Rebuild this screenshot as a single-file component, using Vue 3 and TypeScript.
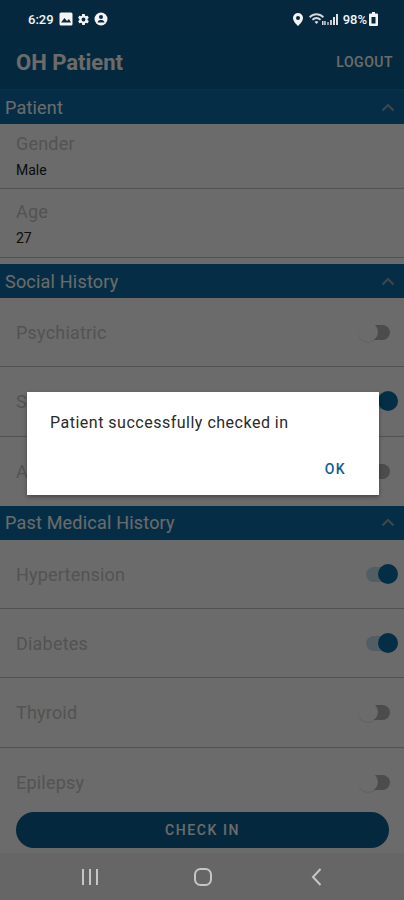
<script setup lang="ts">
interface Section {
  title: string
  kind: 'info' | 'toggle'
  rows: { label: string; value?: string; on?: boolean }[]
}

const sections: Section[] = [
  {
    title: 'Patient',
    kind: 'info',
    rows: [
      { label: 'Gender', value: 'Male' },
      { label: 'Age', value: '27' }
    ]
  },
  {
    title: 'Social History',
    kind: 'toggle',
    rows: [
      { label: 'Psychiatric', on: false },
      { label: 'Smoking', on: true },
      { label: 'Alcohol', on: false }
    ]
  },
  {
    title: 'Past Medical History',
    kind: 'toggle',
    rows: [
      { label: 'Hypertension', on: true },
      { label: 'Diabetes', on: true },
      { label: 'Thyroid', on: false },
      { label: 'Epilepsy', on: false }
    ]
  }
]
</script>

<template>
  <div class="screen">
    <div class="status-bar">
      <div class="status-side">
        <span class="time">6:29</span>
        <svg width="14" height="14" viewBox="0 0 14 14">
          <rect x="0.5" y="0.5" width="13" height="13" rx="1.5" fill="#f4f4f4" />
          <path d="M2 10.5 5.5 6l2.5 3 2-2 2 3.5z" fill="#0a2a40" />
        </svg>
        <svg width="13" height="13" viewBox="0 0 24 24">
          <path fill="#f4f4f4" d="M19.4 13c.1-.3.1-.7.1-1s0-.7-.1-1l2.1-1.6c.2-.2.2-.4.1-.6l-2-3.5c-.1-.2-.4-.3-.6-.2l-2.5 1c-.5-.4-1.100-.7-1.700-1L14.400 2.400c0-.2-.2-.4-.5-.4h-4c-.2 0-.4.200-.5.400L9 5.100c-.6.300-1.200.6-1.700 1l-2.500-1c-.2-.1-.5 0-.6.200l-2 3.500c-.1.200-.1.500.1.600L4.500 11c0 .3-.1.700-.1 1s0 .7.100 1l-2.100 1.600c-.2.200-.2.400-.1.600l2 3.500c.1.200.4.300.6.200l2.500-1c.5.400 1.100.7 1.700 1l.4 2.700c0 .2.200.4.500.4h4c.2 0 .4-.2.500-.4l.4-2.700c.6-.3 1.200-.6 1.700-1l2.500 1c.2.100.5 0 .6-.2l2-3.500c.1-.2.1-.5-.1-.6zM12 15.500a3.500 3.500 0 1 1 0-7 3.500 3.500 0 0 1 0 7z" />
        </svg>
        <svg width="14" height="14" viewBox="0 0 14 14">
          <circle cx="7" cy="7" r="6.500" fill="#f4f4f4" />
          <circle cx="7" cy="5" r="2" fill="#0a2a40" />
          <path d="M3.500 10.500c.5-2 2-2.500 3.500-2.500s3 .5 3.500 2.500z" fill="#0a2a40" />
        </svg>
      </div>
      <div class="status-side right">
        <svg width="10" height="13" viewBox="0 0 10 13">
          <path fill-rule="evenodd" fill="#f4f4f4" d="M5 0a5 5 0 0 1 5 5c0 3-3 6-5 8-2-2-5-5-5-8a5 5 0 0 1 5-5zm0 3a2 2 0 1 0 0 4 2 2 0 0 0 0-4z" />
        </svg>
        <svg class="wifi" width="17" height="13" viewBox="0 0 17 13">
          <path fill="#d8d8d8" d="M0 3.500C4.500-.8 10.500-.8 15 3.500l-1.300 1.400C9.800 1.400 5.200 1.400 1.300 4.900zM2.800 6.200c3-2.800 6.400-2.800 9.400 0l-1.300 1.400c-2.300-2-4.500-2-6.800 0zM5.600 9c1.400-1.300 2.400-1.300 3.800 0L7.500 11z" />
          <rect x="13" y="8" width="1.500" height="4" fill="#d8d8d8" />
          <rect x="15.200" y="8" width="1.500" height="4" fill="#d8d8d8" />
        </svg>
        <svg class="signal" width="11" height="12" viewBox="0 0 11 12">
          <rect x="0" y="9" width="2" height="3" fill="#8f9aa3" />
          <rect x="3" y="7" width="2" height="5" fill="#c4c8cc" />
          <rect x="6" y="4" width="2" height="8" fill="#e0e0e0" />
          <rect x="9" y="1" width="2" height="11" fill="#e0e0e0" />
        </svg>
        <span class="battery-text">98%</span>
        <svg width="9" height="14" viewBox="0 0 9 14">
          <path fill-rule="evenodd" fill="#f4f4f4" d="M3 0h3v1.500h2a1 1 0 0 1 1 1V13a1 1 0 0 1-1 1H1a1 1 0 0 1-1-1V2.500a1 1 0 0 1 1-1h2zM2.500 5v6.500h4V5z" />
        </svg>
      </div>
    </div>

    <header class="app-bar">
      <h1>OH Patient</h1>
      <span class="logout">LOGOUT</span>
    </header>

    <main class="content">
      <section v-for="section in sections" :key="section.title">
        <div class="section-head">
          <span>{{ section.title }}</span>
          <svg width="14" height="9" viewBox="0 0 14 9">
            <path d="M1.500 7.500 7 2l5.500 5.500" fill="none" stroke="#9aa6ad" stroke-width="2" />
          </svg>
        </div>
        <template v-if="section.kind === 'info'">
          <div v-for="row in section.rows" :key="row.label" class="info-row">
            <div class="label">{{ row.label }}</div>
            <div class="value">{{ row.value }}</div>
          </div>
        </template>
        <template v-else>
          <div v-for="row in section.rows" :key="row.label" class="toggle-row">
            <span class="label">{{ row.label }}</span>
            <span :class="['switch', { on: row.on }]"><i></i></span>
          </div>
        </template>
      </section>
    </main>

    <div class="footer">
      <button class="check-in">CHECK IN</button>
    </div>

    <nav class="nav-bar">
      <svg width="18" height="16" viewBox="0 0 18 16">
        <path d="M2 0v16M9 0v16M16 0v16" stroke="#c6c6c6" stroke-width="2" />
      </svg>
      <svg class="home" width="18" height="18" viewBox="0 0 18 18">
        <rect x="1" y="1" width="16" height="16" rx="5.500" fill="none" stroke="#c6c6c6" stroke-width="2" />
      </svg>
      <svg width="11" height="18" viewBox="0 0 11 18">
        <path d="M9.500 1 2 9l7.500 8" fill="none" stroke="#c6c6c6" stroke-width="2" />
      </svg>
    </nav>

    <div class="scrim">
      <div class="dialog">
        <p>Patient successfully checked in</p>
        <div class="dialog-actions">
          <span>OK</span>
        </div>
      </div>
    </div>
  </div>
</template>

<style>
html,
body {
  margin: 0;
  background: #6b6b6b;
}
</style>

<style scoped>
.screen {
  position: relative;
  width: 404px;
  height: 900px;
  display: flex;
  flex-direction: column;
  overflow: hidden;
  background: #fff;
  font-family: Roboto, "Liberation Sans", sans-serif;
}

.status-bar {
  position: relative;
  z-index: 2;
  height: 31px;
  padding: 7px 26px 0 28px;
  box-sizing: border-box;
  display: flex;
  justify-content: space-between;
  align-items: center;
  background: #05283e;
  color: #f4f4f4;
}

.status-side {
  display: flex;
  align-items: center;
  gap: 4px;
}

.status-side.right {
  gap: 0;
}

.time {
  font-size: 13px;
  font-weight: 500;
  margin-right: 1px;
}

.wifi {
  margin-left: 6px;
}

.signal {
  margin-left: 1px;
}

.battery-text {
  font-size: 13px;
  font-weight: 500;
  margin: 0 2px 0 5px;
}

.app-bar {
  height: 59px;
  padding: 4px 11px 0 16px;
  box-sizing: border-box;
  display: flex;
  justify-content: space-between;
  align-items: center;
  background: #0b5f91;
  border-bottom: 1px solid #2d6f99;
}

.app-bar h1 {
  margin: 0;
  font-size: 22px;
  font-weight: 700;
  color: #fff;
}

.logout {
  font-size: 14px;
  font-weight: 500;
  letter-spacing: 0.5px;
  color: #fff;
}

.content {
  flex: 1;
  min-height: 0;
  overflow: hidden;
}

.section-head {
  height: 34px;
  padding: 0 9px 0 5px;
  display: flex;
  align-items: center;
  justify-content: space-between;
  background: #0d6fa8;
  color: #fff;
  font-size: 18px;
  letter-spacing: 0.2px;
}

.label {
  color: #c6c6c6;
  font-size: 18px;
  letter-spacing: 0.2px;
}

.info-row {
  height: 65px;
  padding: 9px 16px 0;
  box-sizing: border-box;
  border-bottom: 1px solid #c4c4c4;
}

.info-row:last-child {
  height: 69px;
  margin-bottom: 6px;
  padding-top: 12px;
}

.info-row .label {
  line-height: 22px;
}

.info-row .value {
  margin-top: 7px;
  font-size: 14px;
  line-height: 16px;
  color: #222;
}

.toggle-row {
  height: 69.300px;
  padding: 0 14px 0 16px;
  box-sizing: border-box;
  display: flex;
  align-items: center;
  justify-content: space-between;
  border-bottom: 1px solid #c4c4c4;
}

.toggle-row:last-child {
  border-bottom: 0;
}

.switch {
  position: relative;
  width: 24px;
  height: 15px;
  border-radius: 8px;
  background: #b5b5b5;
}

.switch i {
  position: absolute;
  left: -8px;
  top: -3px;
  width: 20px;
  height: 20px;
  border-radius: 50%;
  background: #fff;
  box-shadow: 0 1px 1px rgba(0, 0, 0, 0.1);
}

.switch.on {
  background: #c4dfee;
}

.switch.on i {
  left: auto;
  right: -8px;
  background: #0b6fa8;
  box-shadow: none;
}

.footer {
  height: 41px;
  padding: 0 15px 0 16px;
  flex-shrink: 0;
}

.check-in {
  display: block;
  width: 100%;
  height: 36px;
  border: 0;
  border-radius: 18px;
  background: #0b5f91;
  color: #fff;
  font-family: inherit;
  font-size: 14px;
  font-weight: 500;
  letter-spacing: 1.600px;
}

.nav-bar {
  position: relative;
  z-index: 2;
  height: 47px;
  flex-shrink: 0;
  padding: 0 82px 0 81px;
  display: flex;
  align-items: center;
  justify-content: space-between;
  background: #666;
}

.home {
  margin-right: 5px;
}

.scrim {
  position: absolute;
  inset: 0;
  z-index: 1;
  display: flex;
  align-items: center;
  justify-content: center;
  padding: 0 0 13px 2px;
  box-sizing: border-box;
  background: rgba(0, 0, 0, 0.58);
}

.dialog {
  width: 352px;
  height: 103px;
  padding: 21px 33px 0 23px;
  box-sizing: border-box;
  background: #fff;
  box-shadow: 0 2px 4px rgba(0, 0, 0, 0.35);
}

.dialog p {
  margin: 0;
  font-size: 16px;
  line-height: 19px;
  letter-spacing: 0.5px;
  color: #2a2a2a;
}

.dialog-actions {
  margin-top: 29px;
  display: flex;
  justify-content: flex-end;
  color: #0c5f90;
  font-size: 14px;
  font-weight: 500;
  letter-spacing: 1.400px;
}
</style>
